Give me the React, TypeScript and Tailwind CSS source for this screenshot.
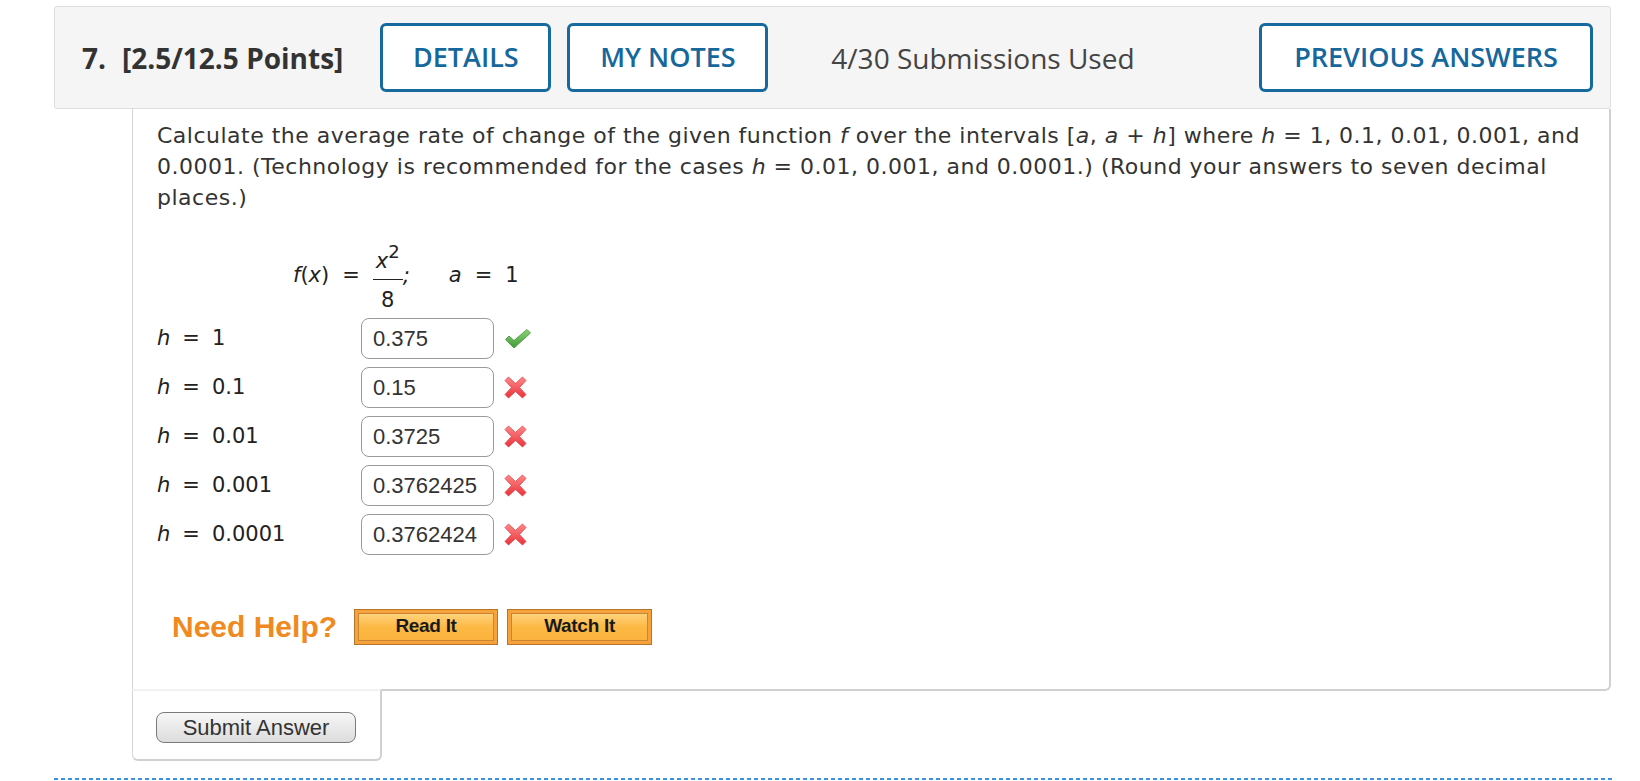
import React from "react";

const CheckIcon = () => (
  <svg width="28" height="22" viewBox="0 0 28 22">
    <defs>
      <linearGradient id="gck" x1="0" y1="0" x2="0" y2="1">
        <stop offset="0" stopColor="#8fd47a" />
        <stop offset="1" stopColor="#3f9a36" />
      </linearGradient>
    </defs>
    <path d="M1.5 11.5 L5 8 L10 12.5 L23 1.5 L26.5 5 L10 20 Z" fill="url(#gck)" stroke="#3d8f35" strokeWidth="0.8" strokeLinejoin="round" />
  </svg>
);

const XIcon = () => (
  <svg width="23" height="23" viewBox="0 0 23 23">
    <defs>
      <linearGradient id="gx" x1="0" y1="0" x2="0" y2="1">
        <stop offset="0" stopColor="#ff8a8a" />
        <stop offset="1" stopColor="#e8323a" />
      </linearGradient>
    </defs>
    <path
      d="M4.5 1 L11.5 7.5 L18.5 1 L22 4.5 L15.5 11.5 L22 18.5 L18.5 22 L11.5 15.5 L4.5 22 L1 18.5 L7.5 11.5 L1 4.5 Z"
      fill="url(#gx)"
      stroke="#e04048"
      strokeWidth="0.8"
      strokeLinejoin="round"
    />
  </svg>
);

const rows = [
  { h: "1", v: "0.375", ok: true },
  { h: "0.1", v: "0.15", ok: false },
  { h: "0.01", v: "0.3725", ok: false },
  { h: "0.001", v: "0.3762425", ok: false },
  { h: "0.0001", v: "0.3762424", ok: false },
];

function HelpButton({ label, w }: { label: string; w: string }) {
  return (
    <div className={`${w} h-[36px] border border-[#b4762c] bg-[#f7a13a] p-[3px]`}>
      <div className="h-full w-full border border-[#c98536] bg-gradient-to-b from-[#ffd27a] via-[#fcb944] to-[#fbb33d] flex items-center justify-center">
        <span className="font-['Liberation_Sans',Arial,sans-serif] font-bold text-[19px] text-[#1a1a1a] tracking-[-0.3px]">
          {label}
        </span>
      </div>
    </div>
  );
}

export default function App() {
  return (
    <div className="w-[1640px] h-[781px] bg-white overflow-hidden font-['Open_Sans',sans-serif] text-[#333]">
      <div className="ml-[54px] w-[1557px] pt-[6px]">
        {/* Header */}
        <div className="h-[103px] bg-[#f5f5f5] border border-[#dedede] rounded-[3px] flex items-center pl-[27px] pr-[17px]">
          <span className="text-[28px] font-bold text-[#333]">7.</span>
          <span className="ml-[16px] text-[28px] font-bold text-[#333]">[2.5/12.5 Points]</span>
          <div className="ml-[37px] w-[171px] h-[69px] border-[3px] border-[#176a9e] rounded-[6px] bg-white flex items-center justify-center">
            <span className="text-[27px] font-semibold text-[#15679c]">DETAILS</span>
          </div>
          <div className="ml-[16px] w-[201px] h-[69px] border-[3px] border-[#176a9e] rounded-[6px] bg-white flex items-center justify-center">
            <span className="text-[27px] font-semibold text-[#15679c]">MY NOTES</span>
          </div>
          <span className="ml-[63px] text-[28px] text-[#444]">4/30 Submissions Used</span>
          <div className="ml-auto w-[334px] h-[69px] border-[3px] border-[#176a9e] rounded-[6px] bg-white flex items-center justify-center">
            <span className="text-[27px] font-semibold text-[#15679c]">PREVIOUS ANSWERS</span>
          </div>
        </div>

        {/* Content */}
        <div className="ml-[78px] h-[582px] border-l border-r-2 border-b-2 border-l-[#d6d6d6] border-r-[#d0d0d0] border-b-[#d0d0d0] rounded-br-[6px] pl-[24px] pt-[11px]">
          <p className="w-[1445px] font-['DejaVu_Sans',Verdana,sans-serif] text-[22px] leading-[31px] tracking-[0.5px] text-[#333]">
            Calculate the average rate of change of the given function <i>f</i> over the intervals [<i>a</i>, <i>a</i> + <i>h</i>] where <i>h</i> = 1, 0.1, 0.01, 0.001, and 0.0001. (Technology is recommended for the cases <i>h</i> = 0.01, 0.001, and 0.0001.) (Round your answers to seven decimal places.)
          </p>

          {/* formula */}
          <div className="mt-[25px] ml-[136px] h-[76px] flex items-center font-['DejaVu_Sans',Verdana,sans-serif] text-[21px] text-[#222]">
            <span>
              <i>f</i>(<i>x</i>)
            </span>
            <span className="mx-[13px]">=</span>
            <span className="inline-flex flex-col items-center translate-y-[6px]">
              <span className="border-b border-[#222] px-[3px] leading-[34px]">
                <i>x</i>
                <span className="text-[18px] relative -top-[10px]">2</span>
              </span>
              <span className="leading-[40px]">8</span>
            </span>
            <span>
              <i>;</i>
            </span>
            <span className="ml-[39px]">
              <i>a</i>
            </span>
            <span className="mx-[13px]">=</span>
            <span>1</span>
          </div>

          {/* rows */}
          <div className="mt-[4px] flex flex-col gap-[8px]">
            {rows.map((r) => (
              <div key={r.h} className="h-[41px] flex items-center">
                <div className="w-[204px] font-['DejaVu_Sans',Verdana,sans-serif] text-[21px] text-[#222]">
                  <i>h</i>
                  <span className="mx-[12px]">=</span>
                  {r.h}
                </div>
                <div className="w-[133px] h-[41px] border-[1.5px] border-[#9a9a9a] rounded-[8px] bg-white flex items-center pl-[11px] overflow-hidden">
                  <span className="font-['Liberation_Sans',Arial,sans-serif] text-[22px] text-[#333] whitespace-nowrap">
                    {r.v}
                  </span>
                </div>
                <div className="ml-[10px] w-[28px] flex items-center">
                  {r.ok ? <CheckIcon /> : <XIcon />}
                </div>
              </div>
            ))}
          </div>

          {/* need help */}
          <div className="mt-[49px] ml-[15px] flex items-center">
            <span className="font-['Liberation_Sans',Arial,sans-serif] font-bold text-[30px] text-[#f08a20]">
              Need Help?
            </span>
            <div className="ml-[17px]">
              <HelpButton label="Read It" w="w-[144px]" />
            </div>
            <div className="ml-[9px]">
              <HelpButton label="Watch It" w="w-[145px]" />
            </div>
          </div>
        </div>

        {/* submit */}
        <div className="ml-[78px] -mt-[2px] w-[250px] h-[72px] border-l border-r-2 border-b-2 border-t-2 border-l-[#d6d6d6] border-r-[#d0d0d0] border-b-[#d0d0d0] border-t-[#f2f2f2] rounded-b-[6px] pl-[23px] pt-[21px]">
          <div className="w-[200px] h-[31px] border border-[#7a7a7a] rounded-[8px] bg-gradient-to-b from-[#f7f7f7] to-[#dcdcdc] flex items-center justify-center">
            <span className="font-['Liberation_Sans',Arial,sans-serif] text-[22px] text-[#333] leading-none">
              Submit Answer
            </span>
          </div>
        </div>

        {/* dashed line */}
        <div className="mt-[17px] h-[2px] w-[1559px] bg-[repeating-linear-gradient(90deg,#3a92dc_0px,#3a92dc_4px,transparent_4px,transparent_7px)]" />
      </div>
    </div>
  );
}
